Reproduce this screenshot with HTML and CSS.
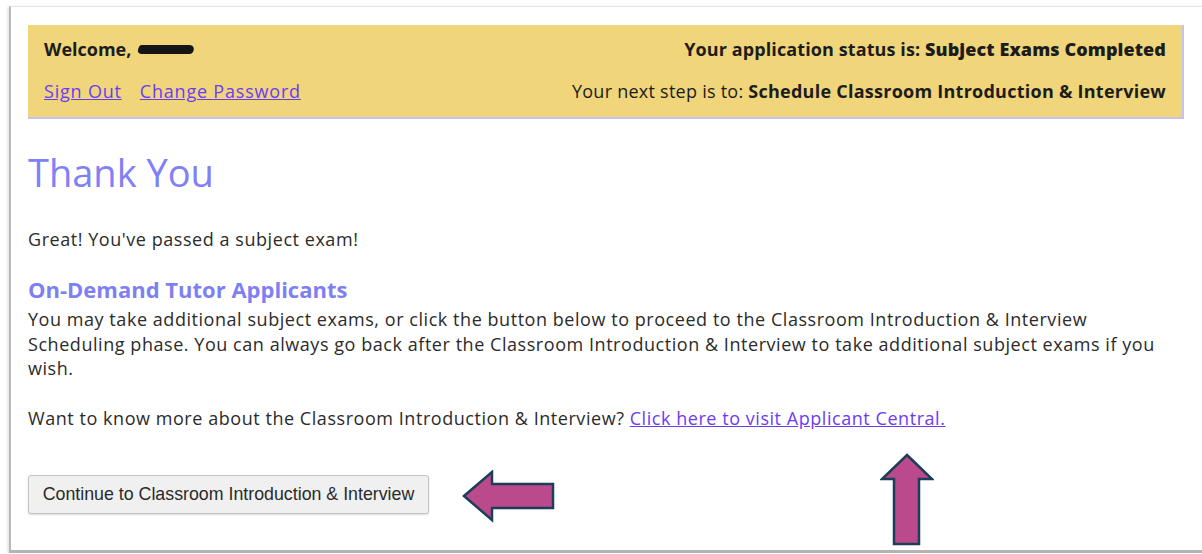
FILE: index.html
```html
<!DOCTYPE html>
<html lang="en">
<head>
<meta charset="utf-8">
<title>Thank You</title>
<link rel="stylesheet" href="styles.css">
</head>
<body>
<div class="frame">
  <header class="banner">
    <div class="welcome">Welcome, <span class="name-mark"></span></div>
    <div class="status">Your application status is: <b>Subject Exams Completed</b></div>
    <nav class="account-links"><a href="#">Sign Out</a><a href="#">Change Password</a></nav>
    <div class="next-step">Your next step is to: <b>Schedule Classroom Introduction &amp; Interview</b></div>
  </header>

  <main class="content">
    <h1 class="title">Thank You</h1>
    <p class="lead">Great! You've passed a subject exam!</p>
    <h2 class="subtitle">On-Demand Tutor Applicants</h2>
    <p class="body-text">You may take additional subject exams, or click the button below to proceed to the Classroom Introduction &amp; Interview Scheduling phase. You can always go back after the Classroom Introduction &amp; Interview to take additional subject exams if you wish.</p>
    <p class="body-text more">Want to know more about the Classroom Introduction &amp; Interview? <a href="#">Click here to visit Applicant Central.</a></p>
    <div class="actions">
      <button class="continue" type="button">Continue to Classroom Introduction &amp; Interview</button>
    </div>
  </main>

  <!-- callout arrows pointing at the button and the link -->
  <svg class="callout callout-left" width="94" height="53" viewBox="0 0 94 53">
    <polygon points="2,26 30,2 30,14 91,14 91,38 30,38 30,50" />
  </svg>
  <svg class="callout callout-up" width="54" height="94" viewBox="0 0 54 94">
    <polygon points="27,2 52,26 39,26 39,91 14,91 14,26 2,26" />
  </svg>
</div>
</body>
</html>
```

FILE: styles.css
```css
html, body {
  margin: 0;
  padding: 0;
  background: #ffffff;
}

body {
  font-family: "Open Sans", "Liberation Sans", sans-serif;
  color: #2b2b2b;
  overflow: hidden;
}

.frame {
  position: relative;
  box-sizing: border-box;
  margin: 6px 0 0 9px;
  width: 1210px;
  height: 547px;
  padding: 18px 0 0 17px;
  border-top: 1px solid #e6e6e6;
  border-left: 2px solid #b9b9b9;
  border-bottom: 3px solid #b4b4b4;
  box-shadow: -1px 1px 3px rgba(0, 0, 0, 0.15);
  background: #ffffff;
}

/* yellow account banner */
.banner {
  box-sizing: border-box;
  width: 1156px;
  height: 94px;
  background: #f0d57a;
  border-right: 2px solid #c6c3ee;
  border-bottom: 2px solid #c6c3ee;
  padding: 12px 16px 0 16px;
  display: grid;
  grid-template-columns: auto 1fr;
  grid-template-rows: 24px 24px;
  row-gap: 18px;
  font-size: 18px;
  color: #1c1c1c;
}

.welcome {
  font-weight: 700;
  display: flex;
  align-items: center;
}

.name-mark {
  display: inline-block;
  width: 56px;
  height: 9px;
  margin-left: 7px;
  background: #151515;
  border-radius: 2px 6px 3px 5px;
  transform: skewX(-20deg);
}

.status,
.next-step {
  text-align: right;
  white-space: nowrap;
}

.next-step {
  letter-spacing: 0.25px;
}

.status {
  font-weight: 700;
  letter-spacing: 0.1px;
}

.account-links {
  display: flex;
  gap: 18px;
  letter-spacing: 0.8px;
}

a {
  color: #6c3cf5;
  text-decoration: underline;
}

.content {
  padding-top: 29px;
}

.title {
  margin: 0;
  font-size: 38px;
  font-weight: 400;
  color: #8080f7;
  line-height: 48px;
}

.lead {
  margin: 31px 0 0;
  font-size: 18px;
  line-height: 24px;
  letter-spacing: 0.55px;
}

.subtitle {
  margin: 25px 0 0;
  font-size: 22px;
  font-weight: 700;
  color: #7f7ff4;
  line-height: 26px;
}

.body-text {
  margin: 5px 0 0;
  font-size: 18px;
  line-height: 24.5px;
  letter-spacing: 0.55px;
  width: 1138px;
}

.more {
  margin-top: 25px;
}

.actions {
  margin-top: 45px;
}

.continue {
  box-sizing: border-box;
  width: 401px;
  height: 39px;
  padding: 0 4px;
  white-space: nowrap;
  text-align: center;
  font-family: "Liberation Sans", sans-serif;
  font-size: 17.8px;
  color: #2a2a2a;
  background: #f0f0f0;
  border: 1px solid #c4c4c4;
  border-radius: 3px;
  box-shadow: 0 1px 2px rgba(0, 0, 0, 0.15);
}

.callout {
  position: absolute;
  fill: #bb4a8c;
  stroke: #1d3d58;
  stroke-width: 2.5;
  stroke-linejoin: miter;
}

.callout-left {
  left: 451px;
  top: 463px;
}

.callout-up {
  left: 869px;
  top: 446px;
}
```
